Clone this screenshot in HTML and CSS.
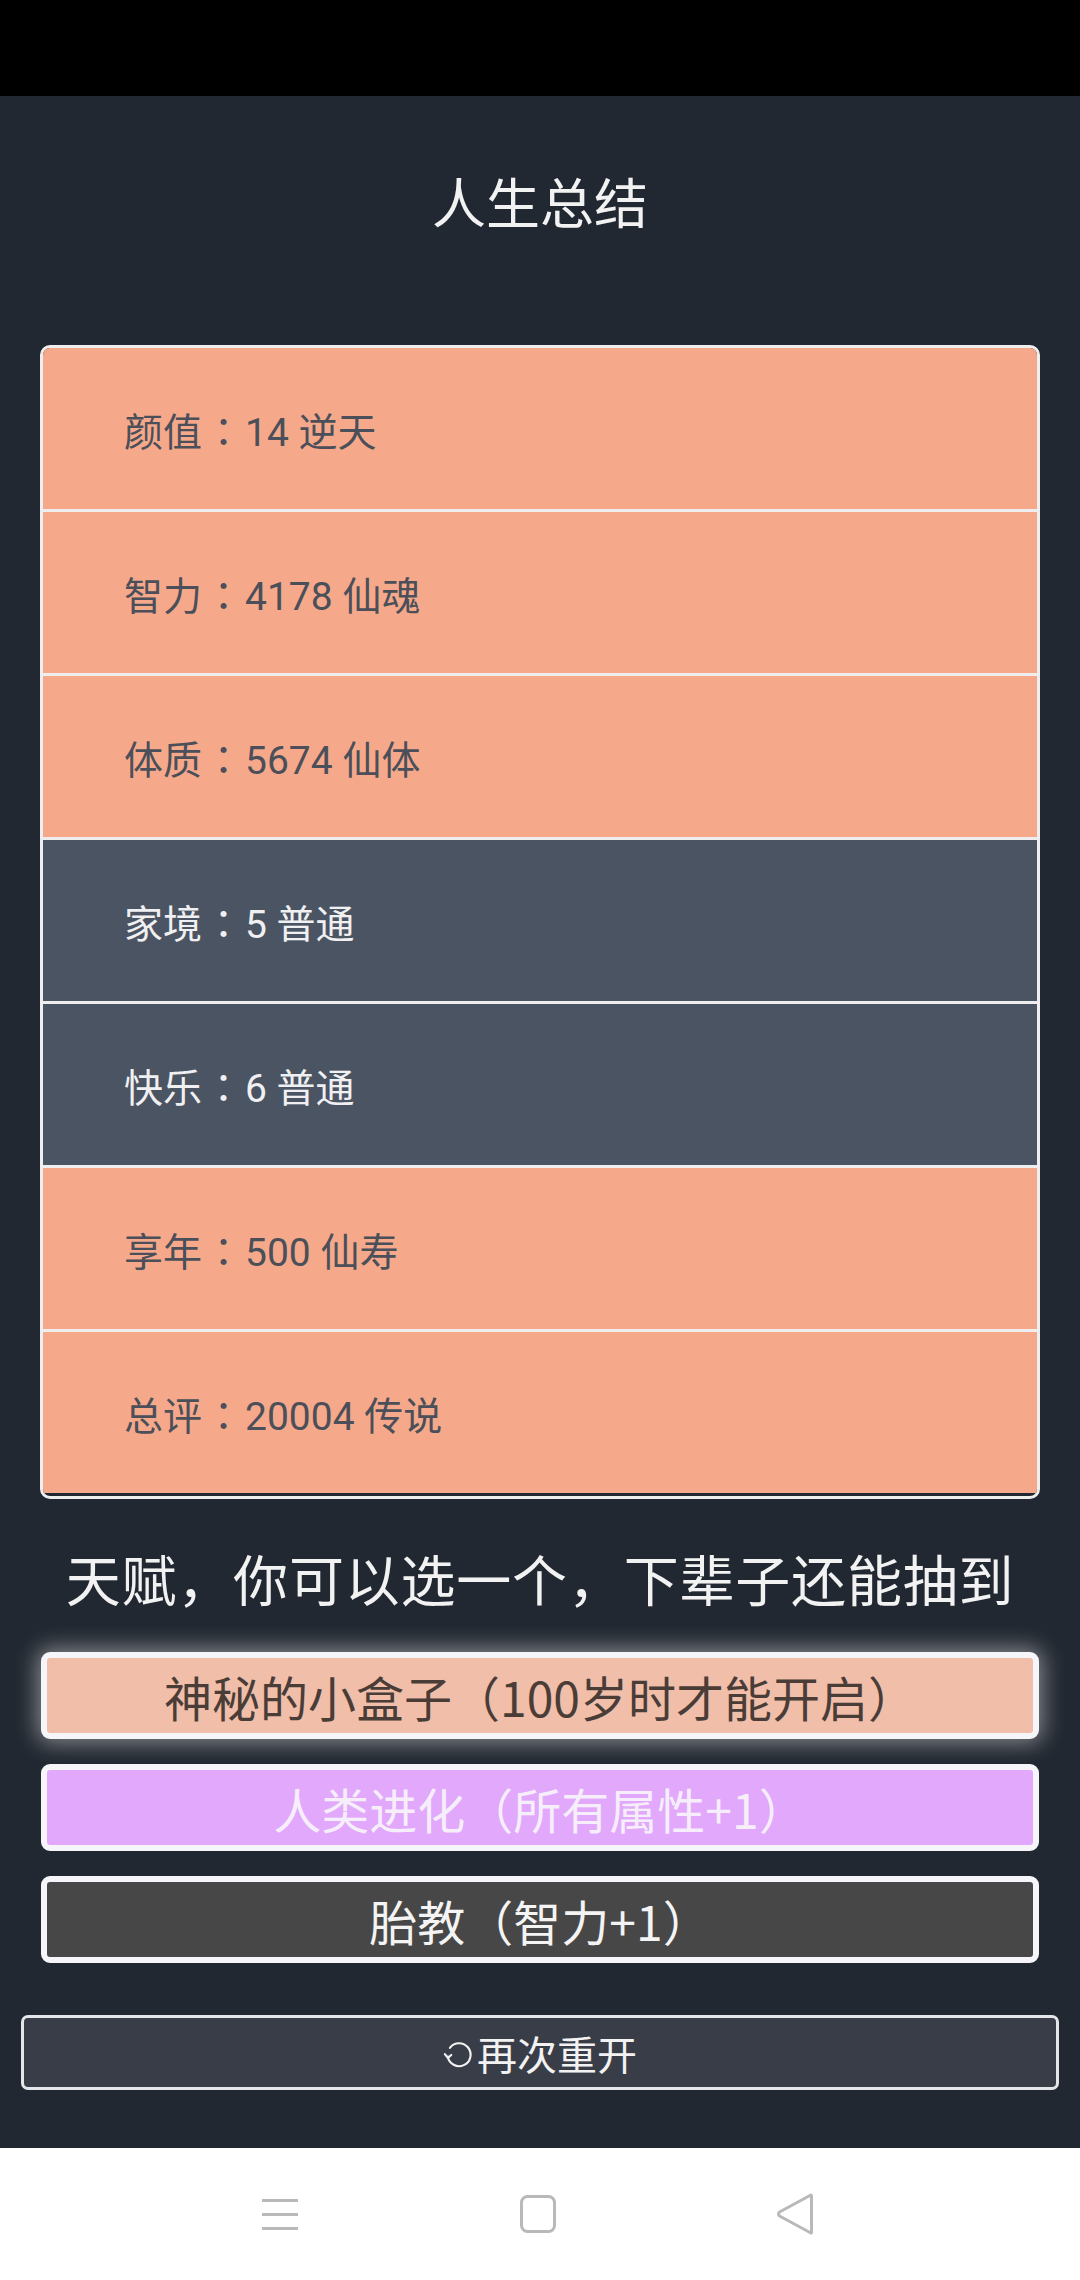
FILE: index.html
```html
<!DOCTYPE html>
<html lang="zh-CN">
<head>
<meta charset="utf-8">
<title>人生总结</title>
<link rel="stylesheet" href="styles.css">
</head>
<body>
<div class="status-bar"></div>
<main class="page">
  <h1 class="title">人生总结</h1>
  <div class="summary">
    <div class="row row-gold">颜值<span class="colon">：</span>14 逆天</div>
    <div class="row row-gold">智力<span class="colon">：</span>4178 仙魂</div>
    <div class="row row-gold">体质<span class="colon">：</span>5674 仙体</div>
    <div class="row row-plain">家境<span class="colon">：</span>5 普通</div>
    <div class="row row-plain">快乐<span class="colon">：</span>6 普通</div>
    <div class="row row-gold">享年<span class="colon">：</span>500 仙寿</div>
    <div class="row row-gold">总评<span class="colon">：</span>20004 传说</div>
  </div>
  <h2 class="talent-title">天赋，你可以选一个，下辈子还能抽到</h2>
  <div class="talents">
    <div class="talent talent-box selected">神秘的小盒子（100岁时才能开启）</div>
    <div class="talent talent-evo">人类进化（所有属性+1）</div>
    <div class="talent talent-edu">胎教（智力+1）</div>
  </div>
  <button class="restart"><svg class="restart-icon" viewBox="0 0 24 24" width="32" height="32"><path d="M3.6 13.2 A8.6 8.6 0 1 0 5.2 6.6" fill="none" stroke="#f2f2f2" stroke-width="1.6" stroke-linecap="round"/><path d="M1.4 11.4 L3.6 14.2 L6.2 12" fill="none" stroke="#f2f2f2" stroke-width="1.6" stroke-linecap="round" stroke-linejoin="round"/></svg><span>再次重开</span></button>
</main>
<nav class="nav-bar">
  <svg class="nav-icon" viewBox="0 0 36 36" width="36" height="36"><rect x="0" y="3" width="36" height="3" fill="#b9b9b9"/><rect x="0" y="17" width="36" height="3" fill="#b9b9b9"/><rect x="0" y="31" width="36" height="3" fill="#b9b9b9"/></svg>
  <svg class="nav-icon" viewBox="0 0 36 38" width="36" height="38"><rect x="1.5" y="1.5" width="33" height="35" rx="6" fill="none" stroke="#b9b9b9" stroke-width="3"/></svg>
  <svg class="nav-icon" viewBox="0 0 40 42" width="40" height="42"><path d="M36.5 3 L36.5 39 Q36.5 41 35 39.5 L4.5 23 Q2.5 21 4.5 19 L35 2.5 Q36.5 1.5 36.5 3 Z" fill="none" stroke="#b9b9b9" stroke-width="3" stroke-linejoin="round"/></svg>
</nav>
</body>
</html>
```
FILE: styles.css
```css
* { box-sizing: border-box; }
html, body {
  margin: 0;
  padding: 0;
}
body {
  width: 1080px;
  height: 2280px;
  background: #222831;
  font-family: Roboto, "Noto Sans CJK SC", "Noto Sans", sans-serif;
  display: flex;
  flex-direction: column;
  overflow: hidden;
}
.status-bar {
  height: 96px;
  background: #000;
  flex: none;
}
.page {
  height: 2052px;
  flex: none;
  display: flex;
  flex-direction: column;
  align-items: center;
  padding-top: 67px;
}
.title {
  margin: 0;
  height: 76px;
  line-height: 76px;
  font-size: 54px;
  font-weight: 400;
  color: #f2f2f2;
  font-family: "Noto Sans CJK SC", sans-serif;
}
.summary {
  margin-top: 106px;
  width: 1000px;
  border: 3px solid #eeeeee;
  border-radius: 10px;
  overflow: hidden;
  background: #222831;
  padding-bottom: 3px;
  display: flex;
  flex-direction: column;
}
.row {
  height: 164px;
  border-bottom: 3px solid #eeeeee;
  display: flex;
  align-items: center;
  padding-left: 81px;
  font-size: 39px;
  white-space: pre;
}
.colon {
  font-family: "Noto Sans CJK TC", sans-serif;
  padding: 0 2px;
}
.row:last-child {
  height: 161px;
  border-bottom: none;
}
.row-gold {
  background: #f6a98a;
  color: #4b4f59;
}
.row-plain {
  background: #4b5462;
  color: #f0f0f2;
}
.talent-title {
  margin: 40px 0 0;
  height: 77px;
  line-height: 77px;
  font-size: 55px;
  font-weight: 400;
  color: #f2f2f2;
  font-family: "Noto Sans CJK SC", sans-serif;
  letter-spacing: 0.8px;
}
.talents {
  margin-top: 36px;
  width: 998px;
  display: flex;
  flex-direction: column;
  gap: 25px;
}
.talent {
  height: 87px;
  border: 6px solid #f6f6fa;
  border-radius: 9px;
  display: flex;
  align-items: center;
  justify-content: center;
  font-size: 48px;
  font-family: "Noto Sans CJK SC", sans-serif;
}
.talent-box {
  background: #f0bea9;
  color: #4a3c37;
}
.selected {
  box-shadow: 0 0 22px 4px rgba(255, 255, 255, 0.45);
}
.talent-evo {
  background: #e1a8fb;
  color: #f6eefa;
}
.talent-edu {
  background: #474747;
  color: #f4f4f4;
}
.restart {
  margin-top: 52px;
  width: 1038px;
  height: 75px;
  background: #393d47;
  border: 3px solid #e4e6ea;
  border-radius: 7px;
  display: flex;
  align-items: center;
  justify-content: center;
  color: #f2f2f2;
  font-size: 40px;
  font-family: "Noto Sans CJK SC", sans-serif;
  padding: 0;
}
.restart-icon {
  margin-right: 2px;
  margin-top: 4px;
}
.nav-bar {
  height: 132px;
  flex: none;
  background: #ffffff;
  display: flex;
  align-items: center;
  justify-content: center;
  gap: 0;
}
.nav-icon:nth-child(1) { margin-left: -4px; }
.nav-icon:nth-child(2) { margin-left: 222px; }
.nav-icon:nth-child(3) { margin-left: 219px; }
```
